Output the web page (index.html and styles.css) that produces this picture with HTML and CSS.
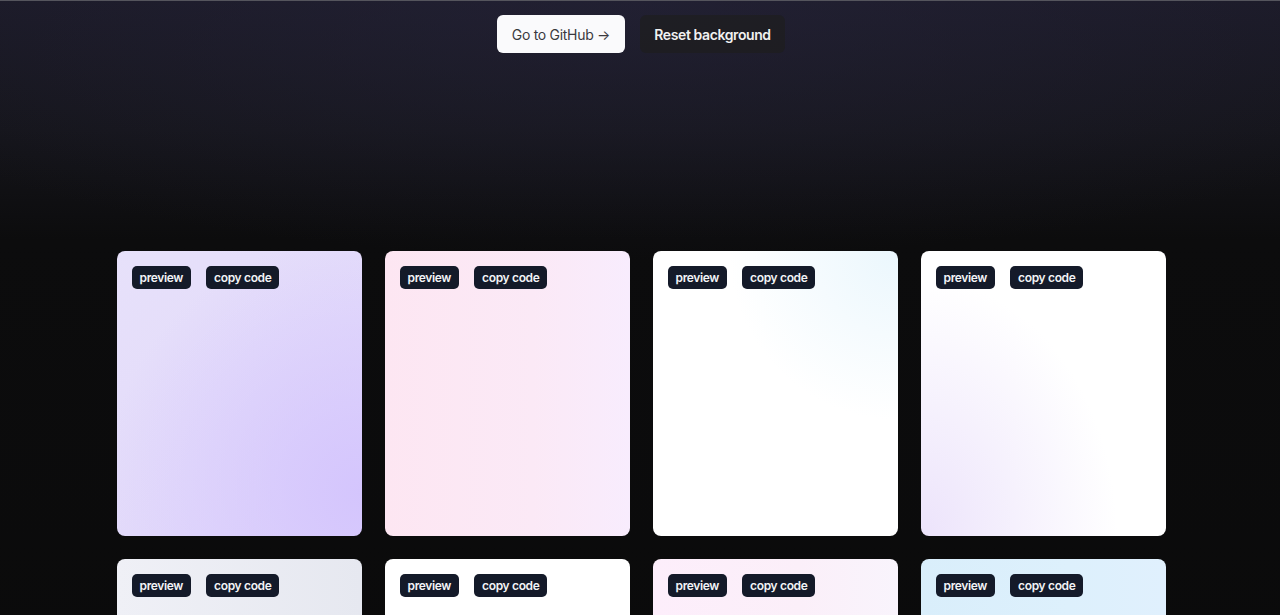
FILE: index.html
```html
<!DOCTYPE html>
<html lang="en">
<head>
<meta charset="utf-8">
<title>Backgrounds</title>
<link rel="stylesheet" href="styles.css">
</head>
<body>
<header class="top">
  <a class="btn btn-light" href="#">Go to GitHub →</a>
  <button class="btn btn-dark" type="button">Reset background</button>
</header>
<main class="grid">
  <div class="card bg-1"><div class="actions"><button class="tag">preview</button><button class="tag">copy code</button></div></div>
  <div class="card bg-2"><div class="actions"><button class="tag">preview</button><button class="tag">copy code</button></div></div>
  <div class="card bg-3"><div class="actions"><button class="tag">preview</button><button class="tag">copy code</button></div></div>
  <div class="card bg-4"><div class="actions"><button class="tag">preview</button><button class="tag">copy code</button></div></div>
  <div class="card bg-5"><div class="actions"><button class="tag">preview</button><button class="tag">copy code</button></div></div>
  <div class="card bg-6"><div class="actions"><button class="tag">preview</button><button class="tag">copy code</button></div></div>
  <div class="card bg-7"><div class="actions"><button class="tag">preview</button><button class="tag">copy code</button></div></div>
  <div class="card bg-8"><div class="actions"><button class="tag">preview</button><button class="tag">copy code</button></div></div>
</main>
</body>
</html>
```

FILE: styles.css
```css
* { box-sizing: border-box; }
html, body { margin: 0; padding: 0; }
body {
  min-height: 100vh;
  border-top: 1px solid #55555d;
  background:
    radial-gradient(ellipse 900px 260px at 50% 0, rgba(40, 38, 62, 0.5), rgba(40, 38, 62, 0) 100%),
    linear-gradient(to bottom, #1b1a27 0, #15151b 130px, #0c0c0d 240px, #0a0a0a 100%);
  background-color: #0a0a0a;
  font-family: Inter, "Noto Sans", sans-serif;
}
.top {
  display: flex;
  justify-content: center;
  gap: 15px;
  padding-top: 14px;
}
.btn {
  display: inline-flex;
  align-items: center;
  justify-content: center;
  height: 38px;
  padding: 0;
  border-radius: 6px;
  font-family: Inter, "Noto Sans", sans-serif;
  font-size: 14px;
  letter-spacing: -0.3px;
  white-space: nowrap;
  text-decoration: none;
  border: 0;
  cursor: pointer;
}
.btn-light {
  width: 128px;
  background: #fafafc;
  color: #3a3a3f;
  font-weight: 400;
  margin-left: 2px;
}
.btn-dark {
  width: 145px;
  background: rgba(30, 30, 26, 0.55);
  color: #f1f1f1;
  font-weight: 600;
  letter-spacing: -0.4px;
}
.grid {
  display: grid;
  grid-template-columns: repeat(4, 245px);
  grid-auto-rows: 285px;
  gap: 23px;
  justify-content: center;
  margin-top: 198px;
  padding-left: 2px;
}
.card {
  border-radius: 8px;
  padding: 15px;
  background: #fff;
}
.actions {
  display: flex;
  gap: 15px;
}
.tag {
  height: 23px;
  padding: 0 8px;
  border: 0;
  border-radius: 5px;
  background: #141a29;
  color: #f2f3f6;
  font-family: Inter, "Noto Sans", sans-serif;
  font-size: 12px;
  letter-spacing: -0.35px;
  font-weight: 600;
  line-height: 23px;
  white-space: nowrap;
  cursor: pointer;
}
.bg-1 {
  background:
    radial-gradient(circle at 100% 85%, #d4c5fd 0, rgba(212, 197, 253, 0) 75%),
    linear-gradient(135deg, #e7e1fa 0%, #e0d6fb 100%);
}
.bg-2 {
  background: linear-gradient(90deg, #fde6f2 0%, #fbe9f6 60%, #f8ecfd 100%);
}
.bg-3 {
  background:
    radial-gradient(circle at 100% 0, #ebf7fd 0, rgba(235, 247, 253, 0) 45%),
    #ffffff;
}
.bg-4 {
  background:
    radial-gradient(ellipse 80% 90% at 0 100%, #ece3fb 0, rgba(236, 227, 251, 0) 100%),
    #ffffff;
}
.bg-5 {
  background: linear-gradient(90deg, #eff0f6 0%, #e6e8f0 100%);
}
.bg-6 { background: #ffffff; }
.bg-7 {
  background: linear-gradient(90deg, #fdeefb 0%, #fbeff9 60%, #f9f4fc 100%);
}
.bg-8 {
  background: linear-gradient(90deg, #d9eefb 0%, #ddf0fc 60%, #e0f0fd 100%);
}
```
